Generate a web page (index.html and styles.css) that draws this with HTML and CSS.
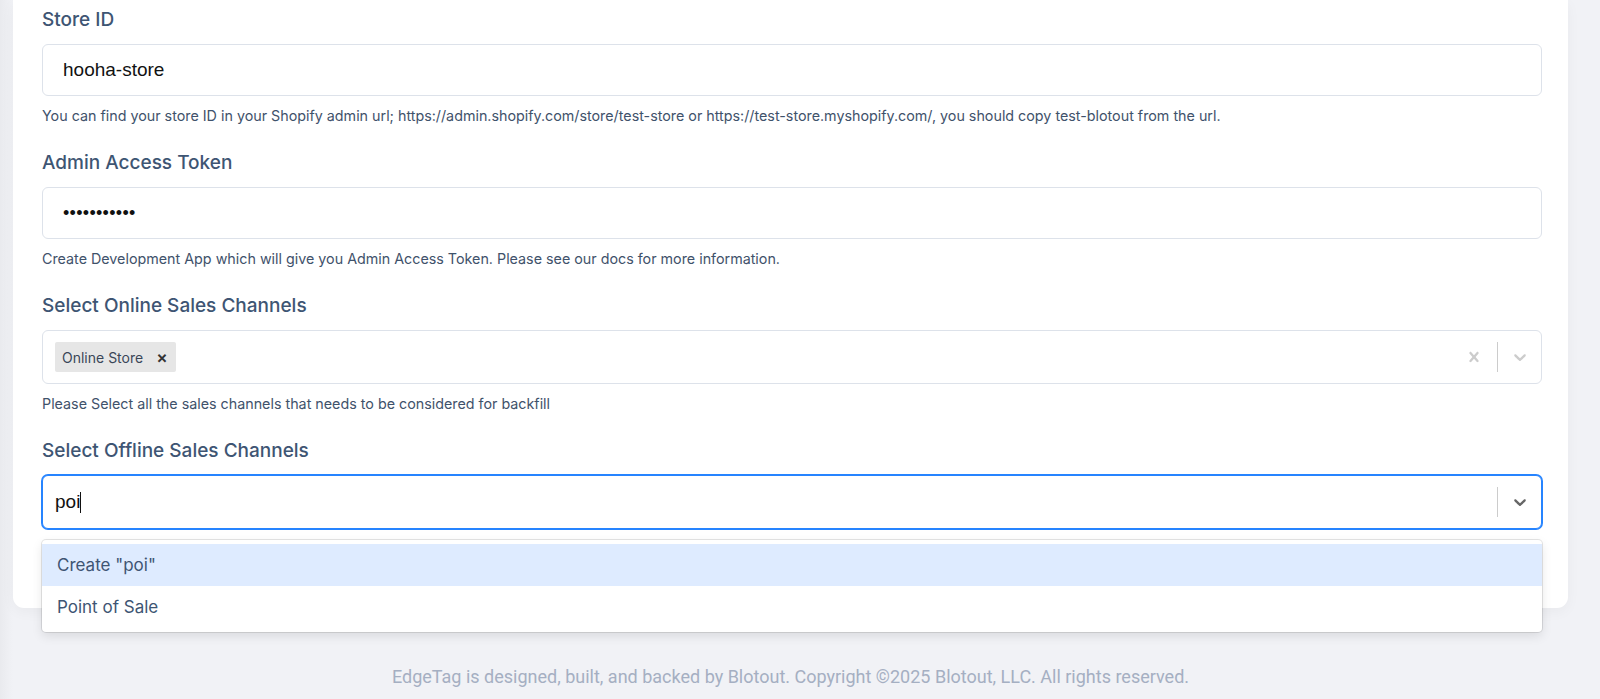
FILE: index.html
```html
<!DOCTYPE html>
<html lang="en">
<head>
    <meta charset="UTF-8">
    <meta name="viewport" content="width=device-width, initial-scale=1.0">
    <title>Shopify Backfill</title>
    <link rel="stylesheet" href="styles.css">
</head>
<body>
    <div class="page">
        <div class="card">
            <div class="field">
                <label class="label">Store ID</label>
                <input class="input" type="text" value="hooha-store">
                <p class="help">You can find your store ID in your Shopify admin url; https://admin.shopify.com/store/test-store or https://test-store.myshopify.com/, you should copy test-blotout from the url.</p>
            </div>
            <div class="field">
                <label class="label">Admin Access Token</label>
                <input class="input" type="password" value="abcdefghijk">
                <p class="help">Create Development App which will give you Admin Access Token. Please see our docs for more information.</p>
            </div>
            <div class="field">
                <label class="label">Select Online Sales Channels</label>
                <div class="select">
                    <div class="select-values">
                        <span class="tag">Online Store <span class="tag-remove">&#215;</span></span>
                    </div>
                    <div class="indicators">
                        <svg class="ind-icon" width="20" height="20" viewBox="0 0 20 20"><path d="M14.348 14.849c-0.469 0.469-1.229 0.469-1.697 0l-2.651-3.030-2.651 3.029c-0.469 0.469-1.229 0.469-1.697 0-0.469-0.469-0.469-1.229 0-1.697l2.758-3.150-2.759-3.152c-0.469-0.469-0.469-1.228 0-1.697s1.228-0.469 1.697 0l2.652 3.031 2.651-3.031c0.469-0.469 1.228-0.469 1.697 0s0.469 1.229 0 1.697l-2.758 3.152 2.758 3.150c0.469 0.469 0.469 1.229 0 1.698z"/></svg>
                        <span class="sep"></span>
                        <svg class="ind-icon" width="20" height="20" viewBox="0 0 20 20"><path d="M4.516 7.548c0.436-0.446 1.043-0.481 1.576 0l3.908 3.747 3.908-3.747c0.533-0.481 1.141-0.446 1.574 0 0.436 0.445 0.408 1.197 0 1.615-0.406 0.418-4.695 4.502-4.695 4.502-0.217 0.223-0.502 0.335-0.787 0.335s-0.57-0.112-0.789-0.335c0 0-4.287-4.084-4.695-4.502s-0.436-1.170 0-1.615z"/></svg>
                    </div>
                </div>
                <p class="help">Please Select all the sales channels that needs to be considered for backfill</p>
            </div>
            <div class="field last">
                <label class="label">Select Offline Sales Channels</label>
                <div class="select focused">
                    <div class="select-values">
                        <span class="typed">poi<span class="caret"></span></span>
                    </div>
                    <div class="indicators">
                        <span class="sep"></span>
                        <svg class="ind-icon dark" width="20" height="20" viewBox="0 0 20 20"><path d="M4.516 7.548c0.436-0.446 1.043-0.481 1.576 0l3.908 3.747 3.908-3.747c0.533-0.481 1.141-0.446 1.574 0 0.436 0.445 0.408 1.197 0 1.615-0.406 0.418-4.695 4.502-4.695 4.502-0.217 0.223-0.502 0.335-0.787 0.335s-0.57-0.112-0.789-0.335c0 0-4.287-4.084-4.695-4.502s-0.436-1.170 0-1.615z"/></svg>
                    </div>
                    <div class="menu">
                        <div class="option active">Create "poi"</div>
                        <div class="option">Point of Sale</div>
                    </div>
                </div>
            </div>
        </div>
        <footer class="footer">EdgeTag is designed, built, and backed by Blotout. Copyright ©2025 Blotout, LLC. All rights reserved.</footer>
    </div>
</body>
</html>
```

FILE: styles.css
```css
body {
    margin: 0;
    padding: 0;
    background-color: #f1f2f6;
    font-family: Inter, "Noto Sans", sans-serif;
    color: #3e5573;
}
.page {
    padding: 0 32px 0 13px;
    background: linear-gradient(to right, #e9eaee 0, #f1f2f6 13px);
    min-height: 100vh;
    box-sizing: border-box;
}
.card {
    background-color: white;
    border-radius: 0 0 11px 11px;
    padding: 7px 26px 79px 29px;
    box-shadow: 0 4px 14px rgba(0, 0, 0, 0.04);
}
.field {
    margin-bottom: 24px;
}
.field.last {
    margin-bottom: 0;
}
.label {
    display: block;
    font-size: 19px;
    line-height: 25px;
    font-weight: 500;
    color: #3e5573;
    margin-bottom: 12px;
}
.input {
    display: block;
    width: 100%;
    box-sizing: border-box;
    height: 52px;
    border: 1px solid #dde2ea;
    border-radius: 6px;
    padding: 0 20px;
    font-family: "Liberation Sans", Arial, sans-serif;
    font-size: 19px;
    color: #111;
    outline: none;
}
.input[type="password"] {
    font-size: 18px;
    letter-spacing: 0.3px;
}
.help {
    margin: 10px 0 0;
    font-size: 14.3px;
    line-height: 20px;
    color: #3f526b;
}
.select {
    position: relative;
    display: flex;
    align-items: center;
    height: 54px;
    box-sizing: border-box;
    border: 1px solid #dde2ea;
    border-radius: 6px;
    background-color: white;
}
.select.focused {
    border-color: #2684ff;
    box-shadow: 0 0 0 1px #2684ff;
}
.select-values {
    flex: 1;
    display: flex;
    align-items: center;
    padding: 0 12px;
}
.tag {
    display: inline-flex;
    align-items: center;
    height: 30px;
    background-color: #e6e6e6;
    border-radius: 2px;
    padding: 0 8px 0 7px;
    font-size: 14px;
    color: #3a4658;
}
.tag-remove {
    margin-left: 13px;
    font-size: 17px;
    font-weight: 600;
    color: #333;
}
.typed {
    font-family: "Liberation Sans", Arial, sans-serif;
    font-size: 19px;
    color: #111;
    display: inline-flex;
    align-items: center;
}
.caret {
    display: inline-block;
    width: 1px;
    height: 21px;
    background-color: #111;
}
.indicators {
    display: flex;
    align-items: center;
    padding-right: 9px;
}
.ind-icon {
    fill: #cccccc;
    padding: 0 2px;
}
.ind-icon.dark {
    fill: #666666;
}
.sep {
    width: 1px;
    height: 30px;
    background-color: #cccccc;
    margin: 0 10px 0 11px;
}
.menu {
    position: absolute;
    top: 100%;
    left: -1px;
    right: -1px;
    margin-top: 12px;
    padding: 4px 0;
    background-color: white;
    border-radius: 4px;
    box-shadow: 0 0 0 1px rgba(0, 0, 0, 0.1), 0 4px 11px rgba(0, 0, 0, 0.1);
    z-index: 2;
}
.option {
    height: 42px;
    line-height: 42px;
    padding: 0 15px;
    font-size: 17px;
    color: #3e5573;
}
.option.active {
    background-color: #deebff;
}
.footer {
    text-align: center;
    padding-top: 58px;
    font-family: Roboto, "Liberation Sans", sans-serif;
    font-size: 18px;
    color: #a5afc2;
}
```
